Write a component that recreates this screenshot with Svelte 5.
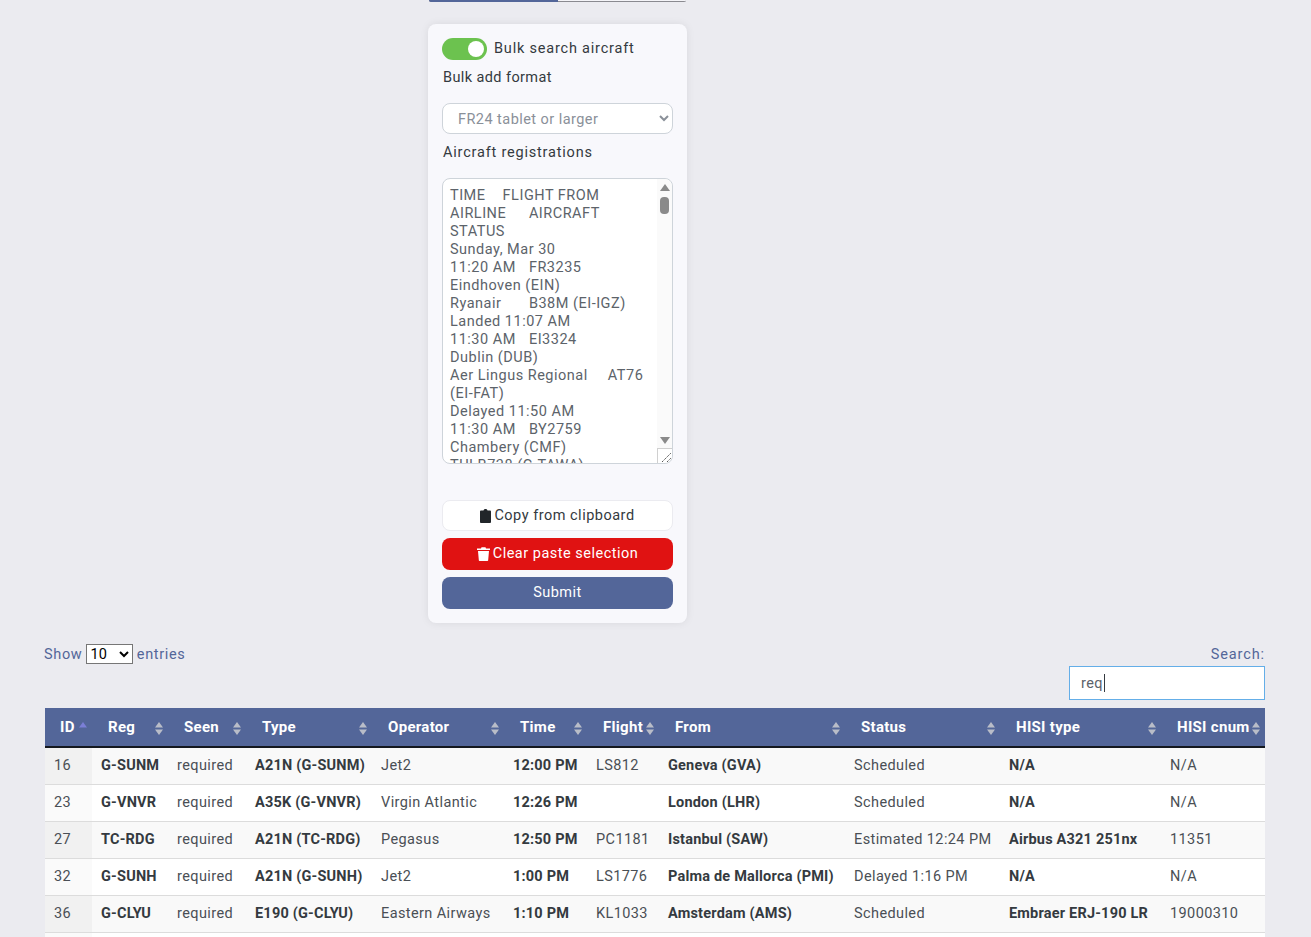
<script>
  let format = "FR24 tablet or larger";
  let pageSize = 10;
  let search = "req";

  const pasted = `TIME\tFLIGHT FROM
AIRLINE\tAIRCRAFT
STATUS
Sunday, Mar 30
11:20 AM\tFR3235
Eindhoven (EIN)
Ryanair\tB38M (EI-IGZ)
Landed 11:07 AM
11:30 AM\tEI3324
Dublin (DUB)
Aer Lingus Regional\tAT76
(EI-FAT)
Delayed 11:50 AM
11:30 AM\tBY2759
Chambery (CMF)
TUI B738 (G-TAWA)`;

  const columns = [
    { name: "ID", width: 47, sorted: true },
    { name: "Reg", width: 76 },
    { name: "Seen", width: 78 },
    { name: "Type", width: 126 },
    { name: "Operator", width: 132 },
    { name: "Time", width: 83 },
    { name: "Flight", width: 72 },
    { name: "From", width: 186 },
    { name: "Status", width: 155 },
    { name: "HISI type", width: 161 },
    { name: "HISI cnum", width: 104 }
  ];

  const rows = [
    ["16", "G-SUNM", "required", "A21N (G-SUNM)", "Jet2", "12:00 PM", "LS812", "Geneva (GVA)", "Scheduled", "N/A", "N/A"],
    ["23", "G-VNVR", "required", "A35K (G-VNVR)", "Virgin Atlantic", "12:26 PM", "", "London (LHR)", "Scheduled", "N/A", "N/A"],
    ["27", "TC-RDG", "required", "A21N (TC-RDG)", "Pegasus", "12:50 PM", "PC1181", "Istanbul (SAW)", "Estimated 12:24 PM", "Airbus A321 251nx", "11351"],
    ["32", "G-SUNH", "required", "A21N (G-SUNH)", "Jet2", "1:00 PM", "LS1776", "Palma de Mallorca (PMI)", "Delayed 1:16 PM", "N/A", "N/A"],
    ["36", "G-CLYU", "required", "E190 (G-CLYU)", "Eastern Airways", "1:10 PM", "KL1033", "Amsterdam (AMS)", "Scheduled", "Embraer ERJ-190 LR", "19000310"],
    ["", "", "", "", "", "", "", "", "", "", ""]
  ];

  // columns drawn bold in the body
  const boldCols = [1, 3, 5, 7, 9];
</script>

<div class="page">
  <div class="tabs">
    <div class="tab active"></div>
    <div class="tab"></div>
  </div>

  <form class="card" on:submit|preventDefault>
    <div class="switch-row">
      <span class="switch"><span class="knob"></span></span>
      <span class="switch-text">Bulk search aircraft</span>
    </div>
    <div class="label format-label">Bulk add format</div>
    <select class="format" bind:value={format}>
      <option>FR24 tablet or larger</option>
    </select>
    <div class="label reg-label">Aircraft registrations</div>
    <div class="paste">
      <textarea readonly value={pasted}></textarea>
      <div class="scrollbar">
        <svg class="arrow" width="10" height="7" viewBox="0 0 10 7"><path d="M5 0 10 7H0z" fill="#8a8a8a" /></svg>
        <div class="thumb"></div>
        <svg class="arrow down" width="10" height="7" viewBox="0 0 10 7"><path d="M0 0H10L5 7z" fill="#8a8a8a" /></svg>
      </div>
      <div class="grip">
        <svg width="15" height="15" viewBox="0 0 15 15"><path d="M5 14 14 5M10 14 14 10" stroke="#555" stroke-dasharray="1.500 .7" fill="none" /></svg>
      </div>
    </div>

    <button type="button" class="btn copy">
      <svg width="11" height="14" viewBox="0 0 11 14"><path d="M3.500 1.500C3.500.7 4.500 0 5.500 0s2 .7 2 1.500H10c.5 0 1 .5 1 1V13c0 .5-.5 1-1 1H1c-.5 0-1-.5-1-1V2.500c0-.5.5-1 1-1z" fill="#212529" /></svg>
      Copy from clipboard
    </button>
    <button type="button" class="btn clear">
      <svg width="13" height="14" viewBox="0 0 13 14"><path d="M0 1.500H4L4.500.3h4L9 1.500h4V3H0zM1 4H12L11.200 13c0 .6-.5 1-1 1H2.800c-.5 0-1-.4-1-1z" fill="#fff" /></svg>
      Clear paste selection
    </button>
    <button type="submit" class="btn submit">Submit</button>
  </form>

  <div class="dt-top">
    <div class="dt-length">
      Show
      <select bind:value={pageSize}>
        <option value={10}>10</option>
        <option value={25}>25</option>
        <option value={50}>50</option>
      </select>
      entries
    </div>
    <div class="dt-search">
      <span>Search:</span>
      <div class="search-box">
        <input bind:value={search} />
        <i class="caret"></i>
      </div>
    </div>
  </div>

  <table>
    <colgroup>
      {#each columns as col}
        <col style="width: {col.width}px" />
      {/each}
    </colgroup>
    <thead>
      <tr>
        {#each columns as col}
          <th>
            {col.name}
            <svg class="sort" width="8" height="13" viewBox="0 0 8 13">
              <path d="M4 0 8 5.500H0z" fill={col.sorted ? "#7b7fd6" : "#b9bdc8"} />
              {#if !col.sorted}
                <path d="M0 7.500H8L4 13z" fill="#b9bdc8" />
              {/if}
            </svg>
          </th>
        {/each}
      </tr>
    </thead>
    <tbody>
      {#each rows as row, r}
        <tr class:odd={r % 2 === 0}>
          {#each row as cell, c}
            <td class:id={c === 0} class:bold={boldCols.includes(c)}>{cell}</td>
          {/each}
        </tr>
      {/each}
    </tbody>
  </table>
</div>

<style>
  :global(body) {
    margin: 0;
    background: #ebebf0;
    overflow: hidden;
  }

  .page {
    height: 937px;
    overflow: hidden;
    font-family: Roboto, "Liberation Sans", sans-serif;
    font-size: 14.5px;
    letter-spacing: 0.4px;
    color: #343a40;
  }

  .tabs {
    display: flex;
    width: 257px;
    height: 2px;
    margin-left: 429px;
    border-radius: 0 0 3px 3px;
    overflow: hidden;
    background: #8a8a90;
  }

  .tab {
    flex: 1;
    background: #f4f4f8;
    border-bottom: 1px solid #8a8a90;
  }

  .tab.active {
    background: #536699;
    border-bottom: none;
  }

  .card {
    display: flex;
    flex-direction: column;
    box-sizing: border-box;
    width: 259px;
    height: 599px;
    margin: 22px 0 0 428px;
    padding: 14px;
    background: #f8f8fc;
    border-radius: 8px;
    box-shadow: 0 0 8px rgba(0, 0, 0, 0.08);
  }

  .switch-row {
    display: flex;
    align-items: center;
    gap: 7px;
    height: 22px;
    color: #343a40;
  }

  .switch-text {
    padding-bottom: 2px;
    letter-spacing: 0.8px;
  }

  .switch {
    display: block;
    position: relative;
    width: 45px;
    height: 22px;
    border-radius: 11px;
    background: #6cc24f;
  }

  .knob {
    position: absolute;
    top: 3px;
    right: 3px;
    width: 16px;
    height: 16px;
    border-radius: 50%;
    background: #fff;
  }

  .label {
    height: 18px;
    line-height: 18px;
    padding-left: 1px;
    color: #343a40;
    letter-spacing: 0.8px;
  }

  .format-label {
    margin-top: 9px;
    letter-spacing: 0.4px;
  }

  .format {
    box-sizing: border-box;
    width: 100%;
    height: 31px;
    margin-top: 16px;
    padding: 2px 0 0 11px;
    font: inherit;
    letter-spacing: 0.45px;
    color: #8a9099;
    background: #fff;
    border: 1px solid #ced4da;
    border-radius: 8px;
  }

  .reg-label {
    margin-top: 10px;
  }

  .paste {
    position: relative;
    height: 286px;
    margin-top: 16px;
  }

  textarea {
    display: block;
    box-sizing: border-box;
    width: 100%;
    height: 100%;
    padding: 8px 0 0 7px;
    font: inherit;
    line-height: 18px;
    letter-spacing: 0.5px;
    tab-size: 26.3px;
    color: #5c636a;
    background: #fff;
    border: 1px solid #ced4da;
    border-radius: 8px;
    overflow: hidden;
    resize: none;
    outline: none;
  }

  .scrollbar {
    position: absolute;
    top: 1px;
    right: 1px;
    bottom: 16px;
    display: flex;
    flex-direction: column;
    align-items: center;
    width: 15px;
    padding-top: 5px;
    box-sizing: border-box;
    background: #fafafa;
    border-radius: 0 8px 0 0;
  }

  .arrow.down {
    margin-top: auto;
    margin-bottom: 4px;
  }

  .thumb {
    width: 9px;
    height: 17px;
    margin-top: 6px;
    border-radius: 4px;
    background: #8a8a8a;
  }

  .grip {
    position: absolute;
    right: 1px;
    bottom: 1px;
    width: 15px;
    height: 15px;
    background: #fff;
    border-left: 1px solid #d0d0d0;
    border-top: 1px solid #d0d0d0;
    box-sizing: border-box;
    border-radius: 0 0 8px 0;
    overflow: hidden;
  }

  .grip svg {
    display: block;
    margin: -1px 0 0 -1px;
  }

  .btn {
    display: flex;
    align-items: center;
    justify-content: center;
    gap: 3px;
    box-sizing: border-box;
    width: 100%;
    height: 32px;
    padding: 0 0 2px;
    font: inherit;
    letter-spacing: 0.5px;
    border-radius: 8px;
    border: none;
  }

  .btn svg {
    margin-top: 2px;
  }

  .copy {
    height: 31px;
    margin-top: 36px;
    padding: 0;
    color: #343a40;
    background: #fff;
    border: 1px solid #ebebf0;
  }

  .copy svg {
    margin-top: 0;
  }

  .clear {
    margin-top: 7px;
    color: #fff;
    background: #e01212;
  }

  .submit {
    margin-top: 7px;
    color: #fff;
    background: #536699;
  }

  .dt-top {
    display: flex;
    justify-content: space-between;
    width: 1221px;
    height: 64px;
    margin: 21px 0 0 44px;
    color: #536699;
    letter-spacing: 0.65px;
  }

  .dt-length {
    height: 20px;
    line-height: 20px;
  }

  .dt-length select {
    width: 47px;
    height: 20px;
    margin-left: -1px;
    font-family: inherit;
    font-size: 14.5px;
    color: #000;
    background: #fff;
    border: 1px solid #767676;
    border-radius: 0;
  }

  .dt-search {
    display: flex;
    flex-direction: column;
    align-items: flex-end;
  }

  .dt-search span {
    height: 22px;
    line-height: 22px;
    letter-spacing: 0.9px;
  }

  .search-box {
    position: relative;
  }

  .search-box input {
    display: block;
    box-sizing: border-box;
    width: 196px;
    height: 34px;
    padding: 0 11px;
    font: inherit;
    letter-spacing: 0.4px;
    color: #5c636a;
    background: #fff;
    border: 1px solid #64aee8;
    outline: none;
  }

  .caret {
    position: absolute;
    top: 8px;
    left: 35px;
    width: 1px;
    height: 18px;
    background: #343a40;
  }

  table {
    table-layout: fixed;
    width: 1220px;
    margin-left: 45px;
    border-collapse: separate;
    border-spacing: 0;
  }

  th {
    position: relative;
    box-sizing: border-box;
    height: 40px;
    padding: 0 0 0 16px;
    font-size: 15px;
    font-weight: 700;
    text-align: left;
    color: #fff;
    background: #536699;
    border-bottom: 2px solid #14181f;
    white-space: nowrap;
    letter-spacing: 0.3px;
  }

  th:first-child {
    padding-left: 15px;
  }

  .sort {
    position: absolute;
    top: 14px;
    right: 5px;
  }

  td {
    box-sizing: border-box;
    height: 37px;
    padding: 0 0 2px 9px;
    background: #fff;
    color: #4a4f55;
    border-bottom: 1px solid #dcdcdc;
    white-space: nowrap;
    overflow: hidden;
  }

  tr.odd td {
    background: #f9f9f9;
  }

  td.id {
    background: #fafafa;
  }

  tr.odd td.id {
    background: #f1f1f1;
  }

  td.bold {
    font-weight: 700;
    color: #343a40;
    letter-spacing: 0.2px;
  }
</style>
